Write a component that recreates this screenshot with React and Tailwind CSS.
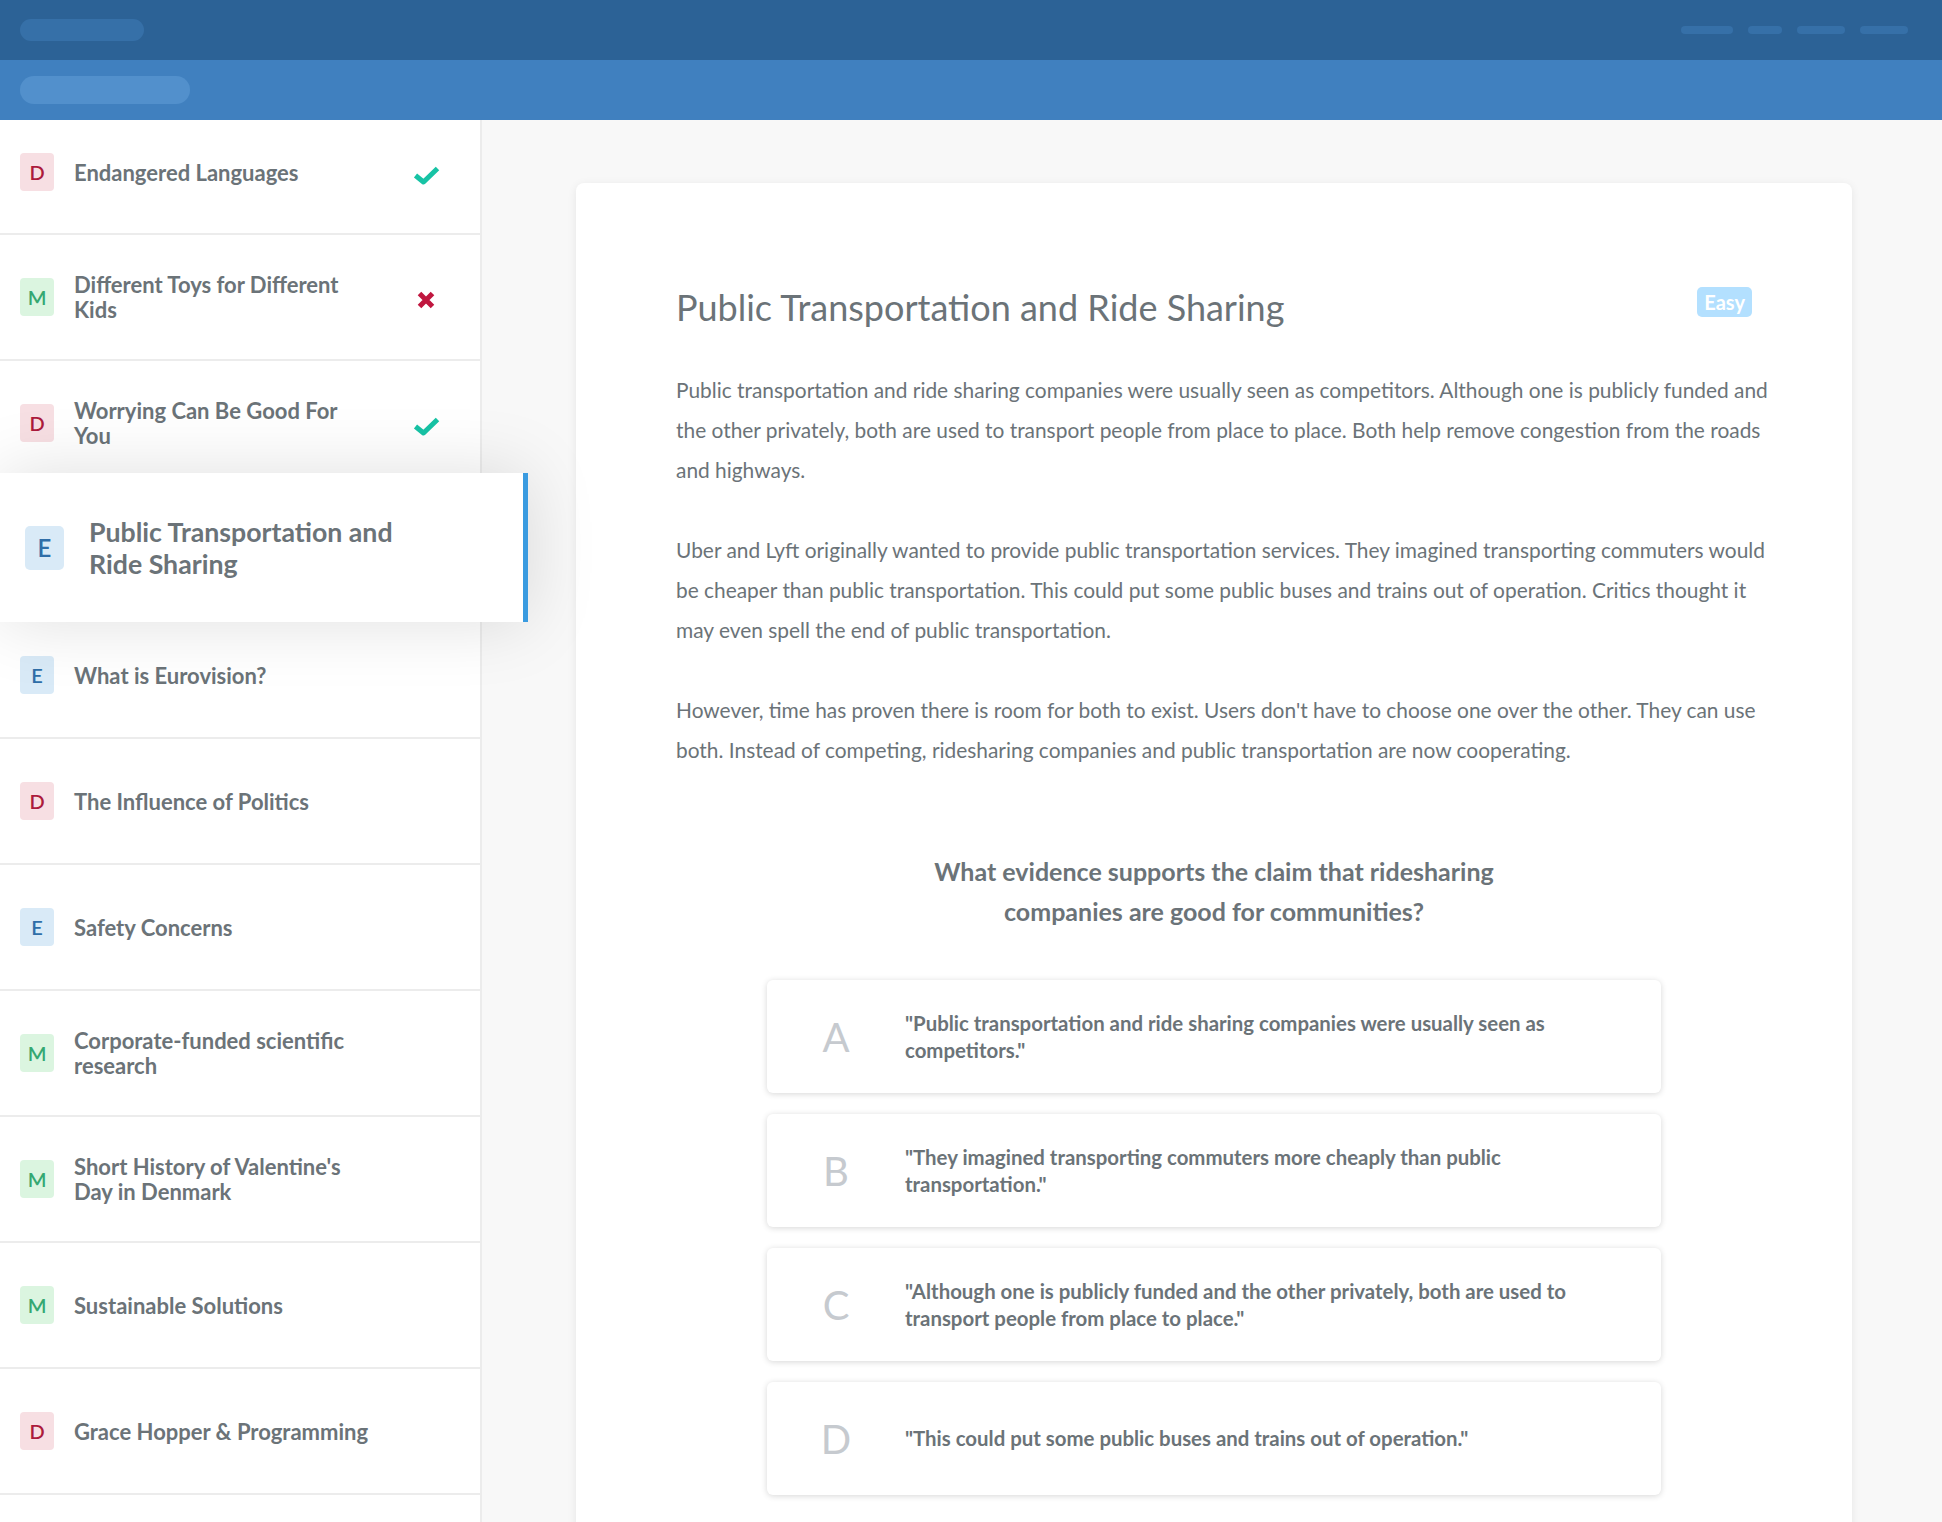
import React from 'react';

const badgeStyles = {
  D: 'bg-[#f7dfe3] text-[#ac1a3c]',
  M: 'bg-[#dbf5e0] text-[#35a872]',
  E: 'bg-[#d9eaf7] text-[#2f6ea8]',
};

const lessons = [
  { level: 'D', lines: ['Endangered Languages'], status: 'done', first: true },
  { level: 'M', lines: ['Different Toys for Different', 'Kids'], status: 'wrong' },
  { level: 'D', lines: ['Worrying Can Be Good For', 'You'], status: 'done' },
  { level: 'E', lines: ['Public Transportation and', 'Ride Sharing'], active: true },
  { level: 'E', lines: ['What is Eurovision?'] },
  { level: 'D', lines: ['The Influence of Politics'] },
  { level: 'E', lines: ['Safety Concerns'] },
  { level: 'M', lines: ['Corporate-funded scientific', 'research'] },
  { level: 'M', lines: ["Short History of Valentine's", 'Day in Denmark'] },
  { level: 'M', lines: ['Sustainable Solutions'] },
  { level: 'D', lines: ['Grace Hopper & Programming'] },
];

const paragraphs = [
  [
    'Public transportation and ride sharing companies were usually seen as competitors. Although one is publicly funded and',
    'the other privately, both are used to transport people from place to place. Both help remove congestion from the roads',
    'and highways.',
  ],
  [
    'Uber and Lyft originally wanted to provide public transportation services. They imagined transporting commuters would',
    'be cheaper than public transportation. This could put some public buses and trains out of operation. Critics thought it',
    'may even spell the end of public transportation.',
  ],
  [
    "However, time has proven there is room for both to exist. Users don't have to choose one over the other. They can use",
    'both. Instead of competing, ridesharing companies and public transportation are now cooperating.',
  ],
];

const answers = [
  { key: 'A', lines: ['"Public transportation and ride sharing companies were usually seen as', 'competitors."'] },
  { key: 'B', lines: ['"They imagined transporting commuters more cheaply than public', 'transportation."'] },
  { key: 'C', lines: ['"Although one is publicly funded and the other privately, both are used to', 'transport people from place to place."'] },
  { key: 'D', lines: ['"This could put some public buses and trains out of operation."'] },
];

function Lines({ lines }) {
  return lines.map((line) => (
    <span key={line} className="block whitespace-nowrap">
      {line}
    </span>
  ));
}

function CheckIcon() {
  return (
    <svg width="27" height="19" viewBox="0 0 27 19" fill="none">
      <polyline points="2.5,9.5 10.5,16 24.5,2.5" stroke="#17c3a5" strokeWidth="5" strokeLinejoin="round" />
    </svg>
  );
}

function CrossIcon() {
  return (
    <svg width="18" height="18" viewBox="0 0 18 18" fill="none">
      <path d="M2.5 2.5 L15.5 15.5 M15.5 2.5 L2.5 15.5" stroke="#c0173f" strokeWidth="5" />
    </svg>
  );
}

function LessonRow({ level, lines, status, first }) {
  return (
    <div
      className={`flex items-center border-b-2 border-[#ececec] bg-white pl-[20px] shrink-0 ${
        first ? 'h-[115px] pb-[9px]' : 'h-[126px]'
      }`}
    >
      <div className={`w-[34px] h-[38px] rounded-[4px] flex items-center justify-center text-[20px] font-semibold shrink-0 ${badgeStyles[level]}`}>
        {level}
      </div>
      <div className="ml-[20px] w-[297px] text-[22px] leading-[25px] font-bold text-[#6b7378]">
        <Lines lines={lines} />
      </div>
      <div className="ml-[41px] w-[28px] flex justify-center mt-[6px]">
        {status === 'done' && <CheckIcon />}
        {status === 'wrong' && <CrossIcon />}
      </div>
    </div>
  );
}

function ActiveRow({ level, lines }) {
  return (
    <div className="relative z-10 -mt-[14px] -mb-[9px] h-[149px] w-[528px] shrink-0 bg-white flex items-center pl-[25px] border-r-[5px] border-[#3a9be0] shadow-[0_0_70px_rgba(0,0,0,0.13)]">
      <div className={`w-[39px] h-[44px] rounded-[5px] flex items-center justify-center text-[24px] font-semibold shrink-0 ${badgeStyles[level]}`}>
        {level}
      </div>
      <div className="ml-[25px] text-[26.7px] leading-[32px] font-bold text-[#6b7378]">
        <Lines lines={lines} />
      </div>
    </div>
  );
}

export default function App() {
  return (
    <div className="h-[1522px] w-full overflow-hidden flex flex-col font-['Lato','Noto_Sans',sans-serif] bg-[#f8f8f8]">
      <header className="h-[60px] shrink-0 bg-[#2c6296] flex items-center justify-between pl-[20px] pr-[34px]">
        <div className="w-[124px] h-[22px] rounded-full bg-[#3670a8]" />
        <div className="flex items-center gap-[15px]">
          <div className="w-[52px] h-[8px] rounded-full bg-[#3670a8]" />
          <div className="w-[34px] h-[8px] rounded-full bg-[#3670a8]" />
          <div className="w-[48px] h-[8px] rounded-full bg-[#3670a8]" />
          <div className="w-[48px] h-[8px] rounded-full bg-[#3670a8]" />
        </div>
      </header>
      <div className="h-[60px] shrink-0 bg-[#4080bf] flex items-center pl-[20px]">
        <div className="w-[170px] h-[28px] rounded-full bg-[#5290cc]" />
      </div>

      <div className="flex flex-1 min-h-0">
        <aside className="w-[482px] shrink-0 bg-white border-r-2 border-[#ececec] flex flex-col relative z-10">
          {lessons.map((l) =>
            l.active ? <ActiveRow key={l.lines[0]} {...l} /> : <LessonRow key={l.lines[0]} {...l} />
          )}
        </aside>

        <main className="flex-1 min-w-0">
          <div className="ml-[94px] mt-[63px] w-[1276px] bg-white rounded-[8px] shadow-[0_2px_10px_rgba(0,0,0,0.08)] pt-[102px] pb-[80px]">
            <div className="pl-[100px] pr-[72px]">
              <div className="flex items-start justify-between">
                <h1 className="text-[36px] leading-[44px] font-normal text-[#6b7378]">
                  Public Transportation and Ride Sharing
                </h1>
                <span className="mt-[2px] mr-[28px] h-[30px] px-[7px] rounded-[5px] bg-[#b3e0ff] text-white font-bold text-[20px] leading-[30px]">
                  Easy
                </span>
              </div>
              <div className="mt-[41px] flex flex-col gap-[40px]">
                {paragraphs.map((p) => (
                  <p key={p[0]} className="text-[20.9px] leading-[40px] text-[#6b7378]">
                    <Lines lines={p} />
                  </p>
                ))}
              </div>
            </div>

            <h2 className="mt-[81px] text-center text-[25px] leading-[40px] font-bold text-[#6b7378]">
              <Lines lines={['What evidence supports the claim that ridesharing', 'companies are good for communities?']} />
            </h2>

            <div className="mt-[49px] mx-auto w-[894px] flex flex-col gap-[21px]">
              {answers.map((a) => (
                <div
                  key={a.key}
                  className="h-[113px] bg-white rounded-[6px] shadow-[0_1px_6px_rgba(0,0,0,0.16)] flex items-center"
                >
                  <div className="w-[138px] shrink-0 text-center text-[40px] text-[#c6cacf]">{a.key}</div>
                  <div className="text-[20.4px] leading-[27px] font-bold text-[#6b7378]">
                    <Lines lines={a.lines} />
                  </div>
                </div>
              ))}
            </div>
          </div>
        </main>
      </div>
    </div>
  );
}
